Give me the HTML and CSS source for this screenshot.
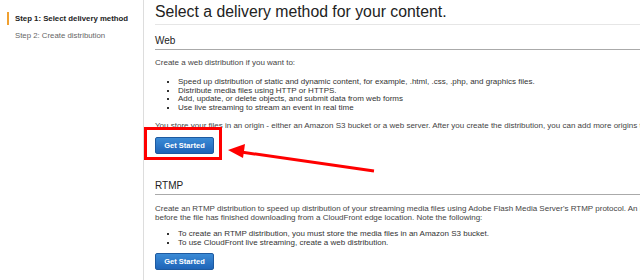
FILE: index.html
```html
<!DOCTYPE html>
<html lang="en">
<head>
  <meta charset="UTF-8" />
  <title>Create Distribution</title>
  <link rel="stylesheet" href="styles.css">
</head>
<body>
  <div class="page">
    <div class="sidebar">
      <div class="step active">Step 1: Select delivery method</div>
      <div class="step">Step 2: Create distribution</div>
    </div>

    <div class="main">
      <h1>Select a delivery method for your content.</h1>

      <div class="method">
        <h2>Web</h2>
        <p>Create a web distribution if you want to:</p>
        <ul>
          <li>Speed up distribution of static and dynamic content, for example, .html, .css, .php, and graphics files.</li>
          <li>Distribute media files using HTTP or HTTPS.</li>
          <li>Add, update, or delete objects, and submit data from web forms</li>
          <li>Use live streaming to stream an event in real time</li>
        </ul>
        <p>You store your files in an origin - either an Amazon S3 bucket or a web server. After you create the distribution, you can add more origins to the distribution.</p>
        <button class="btn">Get Started</button>
      </div>

      <div class="method rtmp">
        <h2>RTMP</h2>
        <p>Create an RTMP distribution to speed up distribution of your streaming media files using Adobe Flash Media Server's RTMP protocol. An RTMP distribution allows an end user to begin playing a media file<br>before the file has finished downloading from a CloudFront edge location. Note the following:</p>
        <ul>
          <li>To create an RTMP distribution, you must store the media files in an Amazon S3 bucket.</li>
          <li>To use CloudFront live streaming, create a web distribution.</li>
        </ul>
        <button class="btn">Get Started</button>
      </div>
    </div>
  </div>

  <!-- annotation drawn over the page -->
  <div class="highlight"></div>
  <svg class="arrow" width="640" height="280" viewBox="0 0 640 280">
    <line x1="241" y1="152" x2="374" y2="171" stroke="#f00" stroke-width="3" />
    <polygon points="228,150 245,144 243,158" fill="#f00" />
  </svg>
</body>
</html>
```

FILE: styles.css
```css
body {
  margin: 0;
  font-family: "Liberation Sans", Arial, sans-serif;
  background: #fff;
  color: #444;
  overflow: hidden;
}

.page {
  display: flex;
  width: 1000px;
  min-height: 280px;
}

.sidebar {
  width: 143px;
  flex-shrink: 0;
  border-right: 1px solid #ddd;
  padding-top: 12px;
}

.step {
  font-size: 7.8px;
  line-height: 13px;
  padding-left: 15px;
  color: #666;
}

.step.active {
  font-weight: bold;
  color: #222;
  border-left: 2px solid #f0a030;
  margin-left: 7px;
  padding-left: 6px;
  margin-bottom: 4px;
}

.main {
  flex: 1;
  padding-left: 11px;
}

h1 {
  font-size: 15.8px;
  font-weight: normal;
  color: #222;
  line-height: 18px;
  margin: 3px 0 0;
  padding-bottom: 3px;
  border-bottom: 1px solid #e6e6e6;
}

h2 {
  font-size: 10px;
  font-weight: normal;
  color: #222;
  line-height: 12px;
  margin: 10px 0 0;
  padding-bottom: 2px;
  border-bottom: 1px solid #aaa;
}

.method p {
  font-size: 8px;
  line-height: 9px;
  margin: 8px 0 0;
}

.method ul {
  font-size: 8px;
  line-height: 8.7px;
  margin: 11px 0 0;
  padding-left: 23px;
  list-style: square;
  color: #333;
}

.method ul + p {
  margin-top: 8px;
}

.btn {
  display: block;
  margin-top: 7px;
  width: 59px;
  height: 17px;
  padding: 0;
  border: 1px solid #1e5aa0;
  border-radius: 2px;
  background: linear-gradient(#3b8bd6, #1f64b8);
  color: #fff;
  font-family: "Liberation Sans", Arial, sans-serif;
  font-size: 7.5px;
  font-weight: bold;
}

.rtmp h2 {
  margin-top: 26px;
}

.rtmp p {
  margin-top: 9px;
}

.rtmp ul {
  margin-top: 8px;
}

.rtmp .btn {
  margin-top: 6px;
}

.highlight {
  position: absolute;
  left: 144px;
  top: 127px;
  width: 72px;
  height: 27px;
  border: 3px solid #f00;
}

.arrow {
  position: absolute;
  left: 0;
  top: 0;
}
```
